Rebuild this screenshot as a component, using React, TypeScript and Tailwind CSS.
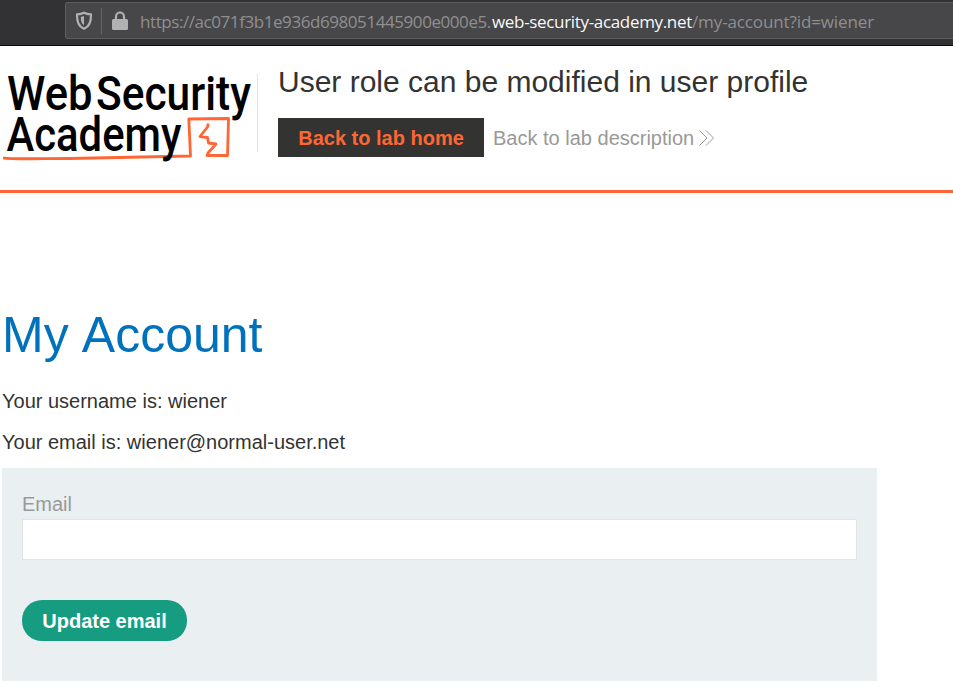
function AddressBar() {
  return (
    <div className="h-[46px] w-full overflow-hidden border-b border-[#0c0c0d] bg-[#323234] pt-[2px] pl-[65px]">
      <div className="flex h-[37px] w-[900px] items-center rounded-[2px] border border-[#5c5c5e] bg-[#474749]">
        <svg className="ml-[9px] shrink-0" width="18" height="20" viewBox="0 0 18 20">
          <path d="M9 1.700C11 2.700 13.4 3.200 16 3.400C16 10.300 14.9 15 9 17.700C3.1 15 2 10.300 2 3.400C4.600 3.200 7 2.700 9 1.700Z" fill="none" stroke="#b1b1b3" strokeWidth="2.2" strokeLinejoin="round" />
          <path d="M9 5V14.200C6.400 12.500 5.900 10 5.800 6C6.800 5.800 8 5.500 9 5Z" fill="#b1b1b3" />
        </svg>
        <div className="ml-[8px] h-[26px] w-px shrink-0 bg-[#636366]" />
        <svg className="ml-[10px] shrink-0" width="16" height="20" viewBox="0 0 16 20">
          <path d="M4 10V5.5a4 4 0 0 1 8 0V10" fill="none" stroke="#b1b1b3" strokeWidth="2.2" />
          <rect x="0" y="8" width="16" height="11" rx="1.5" fill="#b1b1b3" />
        </svg>
        <div className="mt-[2px] ml-[12px] flex whitespace-pre font-['Open_Sans',sans-serif] text-[17px] leading-[24px] text-[#8f8f90]">
          <span className="w-[352px] tracking-[-0.43px]">https://ac071f3b1e936d698051445900e000e5.</span>
          <span className="w-[200px] tracking-[-0.33px] text-[#f9f9fa]">web-security-academy.net</span>
          <span className="tracking-[-0.12px]">/my-account?id=wiener</span>
        </div>
      </div>
    </div>
  );
}

function Logo() {
  return (
    <svg className="shrink-0" width="257" height="120" viewBox="0 46 257 120">
      <g fontFamily="Roboto, sans-serif" fontSize="48.5" fontWeight="500" fill="#000">
        <text x="7" y="110" textLength="85.5" lengthAdjust="spacingAndGlyphs">Web</text>
        <text x="96" y="110" textLength="155" lengthAdjust="spacingAndGlyphs">Security</text>
      </g>
      <path d="M3 157.800C12 159.500 40 158.500 70 158.500L190.500 156L188.800 119L228.500 118.500L227.500 155.500L207 155.500L208 153L216 144L208.500 143L207.500 137.500L200 136.500L207.500 127L208.300 123.500" fill="none" stroke="#ff6633" strokeWidth="2.8" strokeLinejoin="round" />
      <text x="6.5" y="151" textLength="175" lengthAdjust="spacingAndGlyphs" fontFamily="Roboto, sans-serif" fontSize="48.5" fontWeight="500" fill="#000">Academy</text>
    </svg>
  );
}

function LabHeader() {
  return (
    <header className="flex h-[147px] border-b-[3px] border-[#ff6633]">
      <Logo />
      <div className="mt-[28px] h-[78px] w-px bg-[#e4e4e4]" />
      <div className="ml-[20px] pt-[18px]">
        <h2 className="text-[30px] leading-[36px]">User role can be modified in user profile</h2>
        <div className="mt-[18px] flex items-center">
          <a className="flex h-[39px] w-[206px] items-center justify-center bg-[#333332] text-[20px] font-bold text-[#ff6633]">Back to lab home</a>
          <a className="ml-[9px] flex items-center text-[20px] text-[#999999]">
            Back to lab description
            <svg className="ml-[5px]" width="16" height="16" viewBox="0 0 16 16">
              <path d="M0.500 0.500L8 8L0.500 15.500M7 0.500L14.500 8L7 15.500" fill="none" stroke="#999999" />
            </svg>
          </a>
        </div>
      </div>
    </header>
  );
}

export default function App() {
  return (
    <div className="h-[689px] w-full overflow-hidden bg-white font-['Liberation_Sans',Arial,sans-serif] text-[20px] text-[#333332]">
      <AddressBar />
      <LabHeader />
      <main className="w-[877px] pt-[112px] pl-[2px]">
        <h1 className="text-[50px] leading-[60px] text-[#0071bc] [word-spacing:2px]">My Account</h1>
        <p className="mt-[24px] leading-[24px]">Your username is: wiener</p>
        <p className="mt-[17px] leading-[24px]">Your email is: wiener@normal-user.net</p>
        <form className="mt-[14px] h-[213px] bg-[#eaeff2] px-[20px] pt-[24px]">
          <label className="block leading-[24px] text-[#999999]">Email</label>
          <input className="mt-[3px] block h-[41px] w-full border border-[#e4e4e4] bg-white px-2 outline-none" />
          <button type="button" className="mt-[40px] h-[41px] w-[165px] rounded-[20px] bg-[#169c80] font-bold text-white">Update email</button>
        </form>
      </main>
    </div>
  );
}
